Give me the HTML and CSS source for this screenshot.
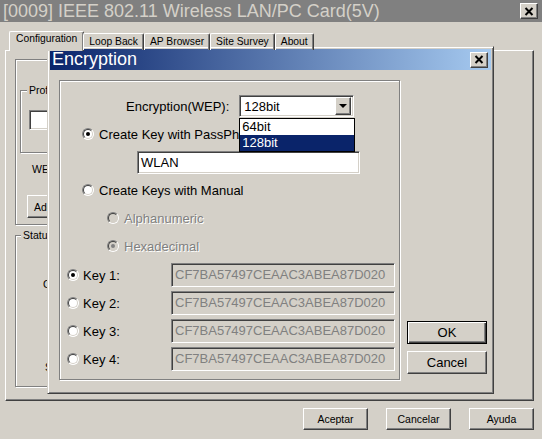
FILE: index.html
```html
<!DOCTYPE html>
<html lang="en">
<head>
  <meta charset="UTF-8">
  <title>IEEE 802.11 Wireless LAN/PC Card</title>
  <link rel="stylesheet" href="styles.css">
</head>
<body>

<!-- Main utility window, inactive behind the dialog -->
<div class="window">
  <div class="caption caption-inactive">
    <span class="caption-title">[0009] IEEE 802.11 Wireless LAN/PC Card(5V)</span>
    <span class="caption-btn">
      <svg width="10" height="9" viewBox="0 0 10 9"><path d="M1.5 1 L8.5 8 M8.5 1 L1.5 8" stroke="#000" stroke-width="2"/></svg>
    </span>
  </div>

  <div class="tabs">
    <div class="tab tab-active">Configuration</div>
    <div class="tab">Loop Back</div>
    <div class="tab">AP Browser</div>
    <div class="tab">Site Survey</div>
    <div class="tab">About</div>
  </div>

  <div class="tab-page">
    <div class="panel">
      <div class="group profile-group">
        <span class="group-label">Profile</span>
        <div class="edit profile-edit"></div>
      </div>
      <div class="panel-label">WEP:</div>
      <button class="btn add-btn">Add</button>
    </div>
    <div class="group status-group">
      <span class="group-label">Status</span>
      <div class="status-line status-channel">Channel:</div>
      <div class="status-line status-ssid">SSID:</div>
    </div>
  </div>

  <!-- Window buttons -->
  <div class="window-actions">
    <button class="btn">Aceptar</button>
    <button class="btn">Cancelar</button>
    <button class="btn">Ayuda</button>
  </div>
</div>

<!-- Encryption dialog -->
<div class="dialog">
  <div class="caption caption-active">
    <span class="caption-title">Encryption</span>
    <span class="caption-btn">
      <svg width="10" height="9" viewBox="0 0 10 9"><path d="M1.5 1 L8.5 8 M8.5 1 L1.5 8" stroke="#000" stroke-width="2"/></svg>
    </span>
  </div>

  <div class="dialog-body">
    <div class="group key-group">
      <div class="row row-wep">
        <span class="wep-label">Encryption(WEP):</span>
        <div class="combo edit">
          <span class="combo-value">128bit</span>
          <span class="combo-arrow btn"></span>
          <!-- open dropdown -->
          <ul class="combo-list">
            <li>64bit</li>
            <li class="selected">128bit</li>
          </ul>
        </div>
      </div>

      <div class="row indent-1">
        <span class="radio checked"></span>
        <span>Create Key with PassPhrase</span>
      </div>
      <div class="row indent-pass">
        <div class="edit passphrase">WLAN</div>
      </div>
      <div class="row indent-1">
        <span class="radio"></span>
        <span>Create Keys with Manual</span>
      </div>
      <div class="row indent-2 disabled">
        <span class="radio"></span>
        <span>Alphanumeric</span>
      </div>
      <div class="row indent-2 disabled">
        <span class="radio checked"></span>
        <span>Hexadecimal</span>
      </div>

      <div class="keys">
        <div class="row key-row">
          <span class="radio checked"></span>
          <span class="key-label">Key 1:</span>
          <div class="edit key-edit">CF7BA57497CEAAC3ABEA87D020</div>
        </div>
        <div class="row key-row">
          <span class="radio"></span>
          <span class="key-label">Key 2:</span>
          <div class="edit key-edit">CF7BA57497CEAAC3ABEA87D020</div>
        </div>
        <div class="row key-row">
          <span class="radio"></span>
          <span class="key-label">Key 3:</span>
          <div class="edit key-edit">CF7BA57497CEAAC3ABEA87D020</div>
        </div>
        <div class="row key-row">
          <span class="radio"></span>
          <span class="key-label">Key 4:</span>
          <div class="edit key-edit">CF7BA57497CEAAC3ABEA87D020</div>
        </div>
      </div>
    </div>

    <div class="dialog-buttons">
      <button class="btn btn-default">OK</button>
      <button class="btn">Cancel</button>
    </div>
  </div>
</div>

</body>
</html>
```

FILE: styles.css
```css
* {
  box-sizing: border-box;
}
body {
  margin: 0;
  width: 542px;
  height: 439px;
  overflow: hidden;
  position: relative;
  background-color: #d4d0c8;
  font-family: "Liberation Sans", Arial, sans-serif;
  font-size: 13px;
  color: #000;
}

/* 3D bevels */
.btn {
  font-family: inherit;
  font-size: inherit;
  color: #000;
  background-color: #d4d0c8;
  border: 1px solid;
  border-color: #fff #404040 #404040 #fff;
  box-shadow: inset -1px -1px #808080, inset 1px 1px #d4d0c8;
  padding: 0;
}
.edit {
  background-color: #fff;
  border: 1px solid;
  border-color: #808080 #fff #fff #808080;
  box-shadow: inset 1px 1px #404040, inset -1px -1px #d4d0c8;
}
.group {
  position: relative;
  border: 1px solid #808080;
  box-shadow: inset 1px 1px #fff, 1px 1px #fff;
}
.group-label {
  position: absolute;
  top: -7px;
  padding: 0 2px;
  background-color: #d4d0c8;
  line-height: 12px;
}

/* title bars */
.caption {
  height: 22px;
  display: flex;
  align-items: center;
  justify-content: space-between;
  padding: 0 4px 0 3px;
  white-space: nowrap;
}
.caption-title {
  font-size: 18px;
}
.caption-inactive {
  background-color: #808080;
  color: #d4d0c8;
}
.caption-active {
  height: 21px;
  padding: 0 3px 0 2px;
  background: linear-gradient(to right, #0a246a, #a6caf0);
  color: #fff;
}
.caption-btn {
  width: 18px;
  height: 16px;
  display: flex;
  align-items: center;
  justify-content: center;
  background-color: #d4d0c8;
  border: 1px solid;
  border-color: #fff #404040 #404040 #fff;
  box-shadow: inset -1px -1px #808080;
}

/* main window */
.window {
  height: 439px;
  display: flex;
  flex-direction: column;
  font-size: 10.5px;
}
.tabs {
  display: flex;
  align-items: flex-end;
  height: 19px;
  margin: 9px 0 0 11px;
  position: relative;
  z-index: 1;
  font-size: 10.3px;
}
.tab {
  height: 17px;
  padding: 2px 5px 0;
  border-top: 1px solid #fff;
  border-left: 1px solid #fff;
  border-right: 1px solid #404040;
  box-shadow: inset -1px 0 #808080;
  border-radius: 2px 2px 0 0;
  white-space: nowrap;
}
.tab-active {
  height: 20px;
  margin: 0 -1px -1px -2px;
  padding: 1px 6px 0;
  background-color: #d4d0c8;
}
.tab-page {
  height: 351px;
  margin: 0 8px 0 5px;
  padding: 8px 9px 0;
  border: 1px solid;
  border-color: #fff #404040 #404040 #fff;
  box-shadow: inset -1px -1px #808080;
}
.panel {
  width: 460px;
  height: 166px;
  padding: 30px 0 0 4px;
  border: 1px solid #808080;
  box-shadow: inset 1px 1px #fff, 1px 1px #fff;
}
.profile-group {
  height: 63px;
  width: 300px;
  padding: 19px 0 0 8px;
}
.profile-group .group-label {
  left: 6px;
}
.profile-edit {
  width: 200px;
  height: 20px;
}
.panel-label {
  margin: 10px 0 0 12px;
  line-height: 12px;
}
.add-btn {
  display: block;
  width: 70px;
  height: 23px;
  margin: 20px 0 0 7px;
  text-align: left;
  padding-left: 6px;
}
.status-group {
  width: 460px;
  height: 152px;
  margin-top: 10px;
  padding-top: 42px;
}
.status-group .group-label {
  left: 5px;
}
.status-line {
  line-height: 12px;
}
.status-channel {
  padding-left: 27px;
}
.status-ssid {
  margin-top: 71px;
  padding-left: 29px;
}
.window-actions {
  display: flex;
  justify-content: flex-end;
  gap: 18px;
  margin: 7px 8px 0 0;
}
.window-actions .btn {
  width: 65px;
  height: 22px;
}

/* encryption dialog */
.dialog {
  position: absolute;
  left: 47px;
  top: 46px;
  width: 447px;
  height: 348px;
  padding: 2px;
  display: flex;
  flex-direction: column;
  border: 1px solid;
  border-color: #d4d0c8 #404040 #404040 #d4d0c8;
  box-shadow: inset 1px 1px #fff, inset -1px -1px #808080;
  background-color: #d4d0c8;
}
.dialog-body {
  flex: 1;
  display: flex;
  padding: 10px 0 0 9px;
}
.key-group {
  width: 341px;
  height: 300px;
  padding-top: 11px;
}
.row {
  height: 28px;
  display: flex;
  align-items: center;
  white-space: nowrap;
}
.row-wep {
  padding-left: 66px;
}
.wep-label {
  margin-right: 10px;
}
.indent-1 {
  padding-left: 22px;
}
.indent-2 {
  padding-left: 47px;
}
.indent-pass {
  padding-left: 77px;
}
.disabled {
  color: #808080;
  text-shadow: 1px 1px #fff;
}

/* radio buttons */
.radio {
  position: relative;
  flex: none;
  width: 12px;
  height: 12px;
  margin-right: 5px;
  border-radius: 50%;
  background-color: #fff;
  border: 1px solid;
  border-color: #808080 #fff #fff #808080;
}
.radio::before {
  content: "";
  position: absolute;
  inset: 0;
  border-radius: 50%;
  border: 1px solid;
  border-color: #404040 #d4d0c8 #d4d0c8 #404040;
}
.radio.checked::after {
  content: "";
  position: absolute;
  left: 3px;
  top: 3px;
  width: 4px;
  height: 4px;
  border-radius: 50%;
  background-color: #000;
}
.disabled .radio {
  background-color: #d4d0c8;
}
.disabled .radio.checked::after {
  background-color: #808080;
}

/* combo box */
.combo {
  position: relative;
  width: 115px;
  height: 22px;
  display: flex;
  align-items: center;
  justify-content: space-between;
  padding: 2px;
}
.combo-value {
  padding-left: 2px;
}
.combo-arrow {
  position: relative;
  width: 16px;
  height: 18px;
}
.combo-arrow::after {
  content: "";
  position: absolute;
  left: 3px;
  top: 6px;
  border-left: 4px solid transparent;
  border-right: 4px solid transparent;
  border-top: 4px solid #000;
}
.combo-list {
  position: absolute;
  left: -1px;
  top: 22px;
  width: 116px;
  margin: 0;
  padding: 0;
  list-style: none;
  background-color: #fff;
  border: 1px solid #000;
  z-index: 2;
}
.combo-list li {
  height: 16px;
  line-height: 16px;
  padding-left: 2px;
}
.combo-list .selected {
  background-color: #0a246a;
  color: #fff;
}

.passphrase {
  width: 223px;
  height: 23px;
  line-height: 21px;
  padding-left: 3px;
}

/* WEP keys */
.keys {
  margin-top: 1px;
}
.key-row {
  padding-left: 7px;
}
.key-row .radio {
  margin-right: 4px;
}
.key-label {
  width: 88px;
}
.key-edit {
  width: 224px;
  height: 24px;
  line-height: 22px;
  padding-left: 3px;
  background-color: #d4d0c8;
  color: #808080;
}

.dialog-buttons {
  display: flex;
  flex-direction: column;
  gap: 7px;
  align-self: flex-end;
  margin: 0 0 17px 7px;
}
.dialog-buttons .btn {
  width: 80px;
  height: 23px;
}
.btn-default {
  border-color: #000;
  box-shadow: inset 1px 1px #fff, inset -1px -1px #404040, inset -2px -2px #808080;
}
```
